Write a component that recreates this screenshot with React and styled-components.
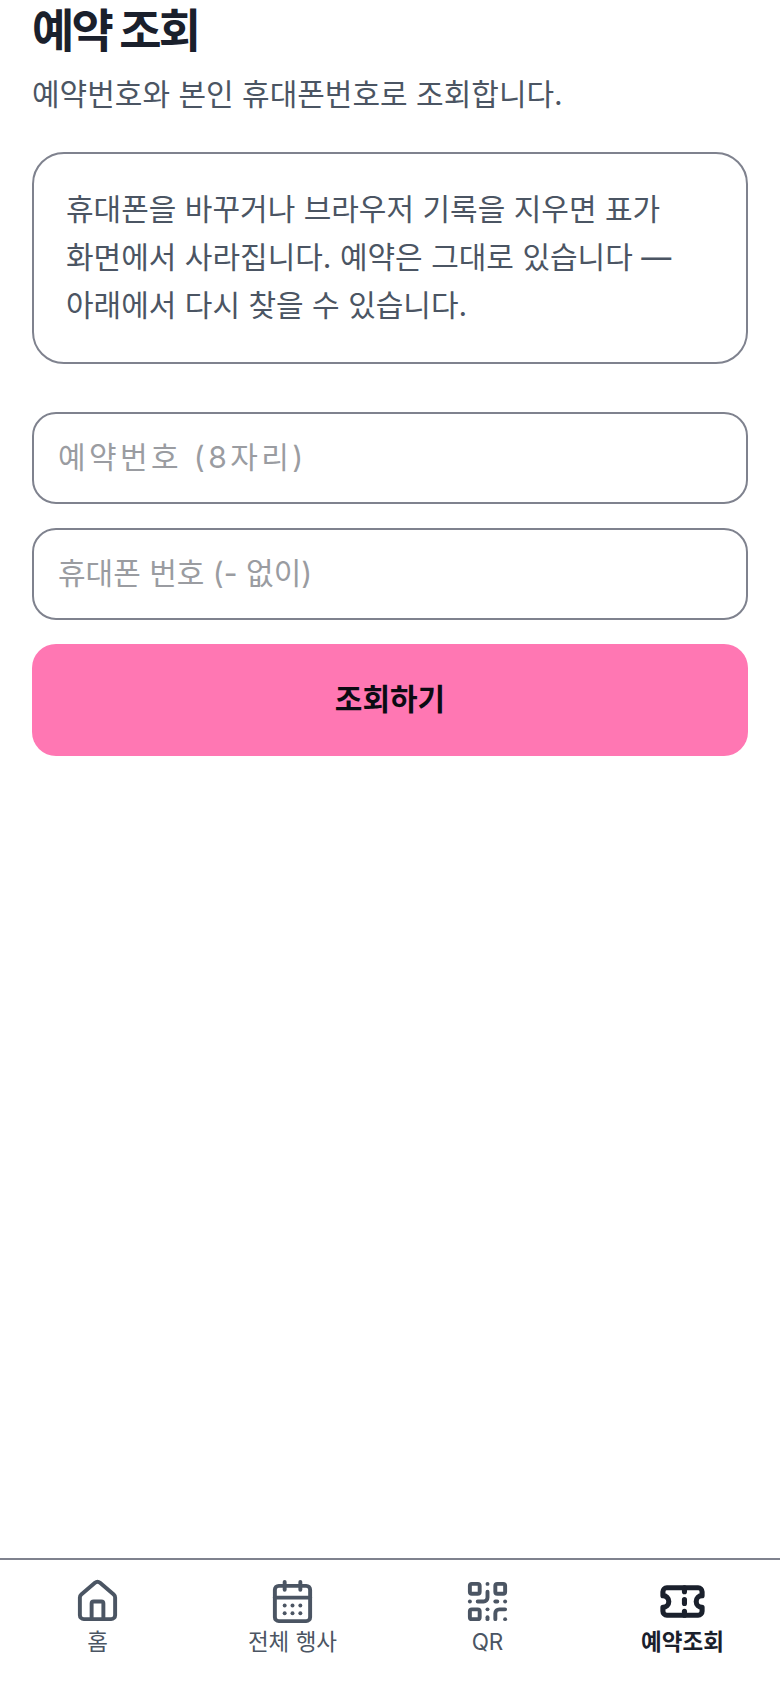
import React from 'react'
import styled, { createGlobalStyle } from 'styled-components'
import { House, CalendarDays, QrCode, Ticket } from 'lucide-react'

const GlobalStyle = createGlobalStyle`
html, body {
  margin: 0;
  padding: 0;
  background: #fff;
}
body {
  font-family: Inter, "Noto Sans CJK KR", sans-serif;
}
* { box-sizing: border-box; }
`

const Page = styled.div`
display: flex;
flex-direction: column;
height: 1688px;
`

const Main = styled.main`
flex: 1;
padding: 0 32px;
`

const Title = styled.h1`
margin: 0;
font-size: 46px;
line-height: 60px;
font-weight: 700;
letter-spacing: -2.8px;
color: #1a202c;
`

const Sub = styled.p`
margin: 10px 0 0;
font-size: 30px;
line-height: 48px;
color: #4b5563;
`

const Notice = styled.div`
margin-top: 34px;
padding: 31px 32px;
height: 212px;
border: 2px solid #7f828e;
border-radius: 32px;
font-size: 30px;
line-height: 48px;
color: #4b5563;
`

const Form = styled.form`
display: flex;
flex-direction: column;
gap: 24px;
margin-top: 48px;
`

const Field = styled.input`
width: 100%;
height: 92px;
padding: 0 24px 2px;
border: 2px solid #7f828e;
border-radius: 24px;
background: #fff;
font: inherit;
font-size: 30px;
letter-spacing: ${({ $spaced }) => ($spaced ? '3.4px' : '0')};
color: #1a202c;
outline: none;
&::placeholder { color: #9a9ca1; opacity: 1; }
`

const Submit = styled.button`
height: 112px;
padding: 0 0 7px;
border: 0;
border-radius: 24px;
background: #ff77b3;
color: #0b0b12;
font: inherit;
font-size: 30px;
font-weight: 700;
`

const Nav = styled.nav`
display: grid;
grid-template-columns: repeat(4, 1fr);
height: 130px;
padding-top: 18px;
border-top: 2px solid #7f828e;
`

const NavItem = styled.a`
display: flex;
flex-direction: column;
align-items: center;
gap: 1px;
color: ${({ $active }) => ($active ? '#1a202c' : '#4b5563')};
font-size: 22.5px;
line-height: 32px;
font-weight: ${({ $active }) => ($active ? 700 : 400)};
`

const items = [
  { label: '홈', Icon: House },
  { label: '전체 행사', Icon: CalendarDays },
  { label: 'QR', Icon: QrCode },
  { label: '예약조회', Icon: Ticket, active: true },
]

export default function App() {
  return (
    <Page>
      <GlobalStyle />
      <Main>
        <Title>예약 조회</Title>
        <Sub>예약번호와 본인 휴대폰번호로 조회합니다.</Sub>
        <Notice>
          휴대폰을 바꾸거나 브라우저 기록을 지우면 표가
          <br />
          화면에서 사라집니다. 예약은 그대로 있습니다 —
          <br />
          아래에서 다시 찾을 수 있습니다.
        </Notice>
        <Form>
          <Field $spaced placeholder="예약번호 (8자리)" />
          <Field placeholder="휴대폰 번호 (- 없이)" />
          <Submit type="button">조회하기</Submit>
        </Form>
      </Main>
      <Nav>
        {items.map(({ label, Icon, active }) => (
          <NavItem key={label} $active={active}>
            <Icon size={47} strokeWidth={active ? 2.6 : 2} />
            {label}
          </NavItem>
        ))}
      </Nav>
    </Page>
  )
}
